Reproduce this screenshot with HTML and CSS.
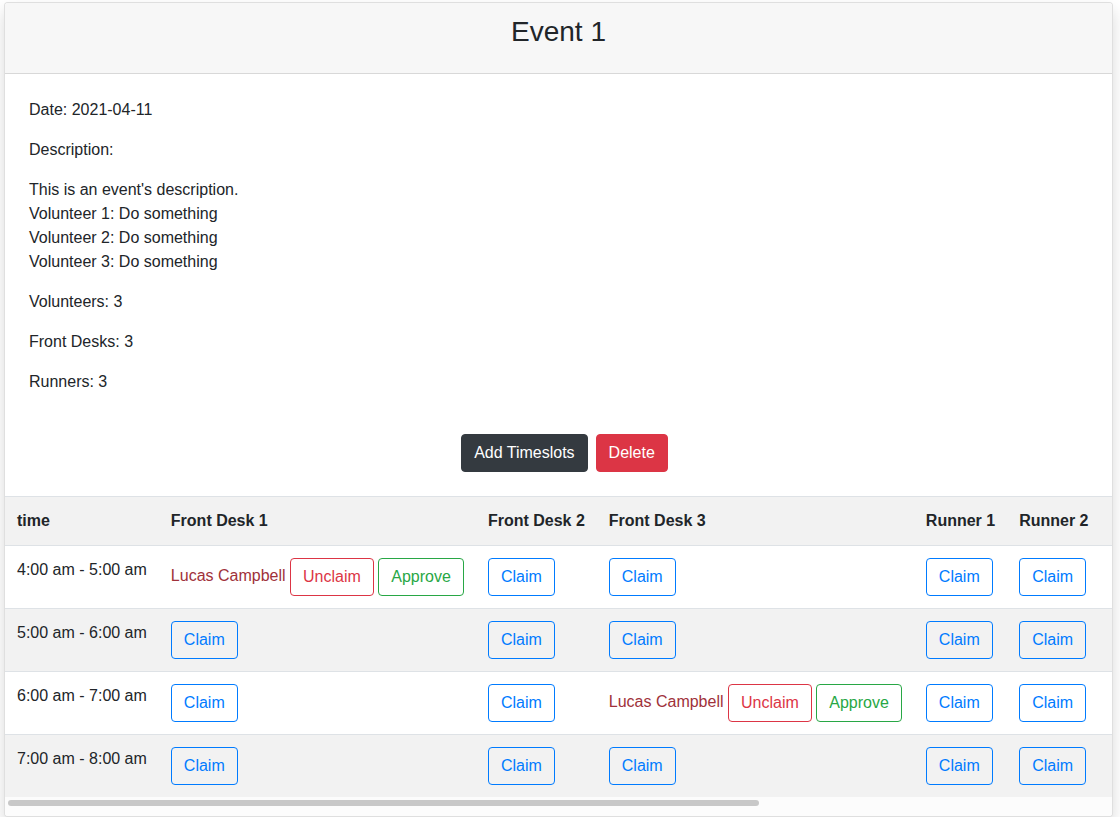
FILE: index.html
```html
<!DOCTYPE html>
<html lang="en">
<head>
<meta charset="utf-8">
<title>Event 1</title>
<link rel="stylesheet" href="styles.css">
</head>
<body>
<div class="page">
  <div class="card">
    <div class="card-header">
      <h3 class="card-title">Event 1</h3>
    </div>
    <div class="card-body">
      <p>Date: 2021-04-11</p>
      <p>Description:</p>
      <p>This is an event's description.<br>Volunteer 1: Do something<br>Volunteer 2: Do something<br>Volunteer 3: Do something</p>
      <p>Volunteers: 3</p>
      <p>Front Desks: 3</p>
      <p>Runners: 3</p>
      <div class="actions">
        <button class="btn btn-dark">Add Timeslots</button>
        <button class="btn btn-danger">Delete</button>
      </div>
    </div>
    <div class="table-responsive">
      <table class="table">
        <thead>
          <tr class="row-gray">
            <th>time</th>
            <th>Front Desk 1</th>
            <th>Front Desk 2</th>
            <th>Front Desk 3</th>
            <th>Runner 1</th>
            <th>Runner 2</th>
            <th>Runner 3</th>
            <th class="vol">Volunteer 1</th>
            <th class="vol">Volunteer 2</th>
            <th class="vol">Volunteer 3</th>
          </tr>
        </thead>
        <tbody>
          <tr>
            <td>4:00 am - 5:00 am</td>
            <td><span class="claimer">Lucas Campbell</span> <button class="btn btn-outline-danger">Unclaim</button> <button class="btn btn-outline-success">Approve</button></td>
            <td><button class="btn btn-outline-primary">Claim</button></td>
            <td><button class="btn btn-outline-primary">Claim</button></td>
            <td><button class="btn btn-outline-primary">Claim</button></td>
            <td><button class="btn btn-outline-primary">Claim</button></td>
            <td><button class="btn btn-outline-primary">Claim</button></td>
            <td><button class="btn btn-outline-primary">Claim</button></td>
            <td><button class="btn btn-outline-primary">Claim</button></td>
            <td><button class="btn btn-outline-primary">Claim</button></td>
          </tr>
          <tr class="row-gray">
            <td>5:00 am - 6:00 am</td>
            <td><button class="btn btn-outline-primary">Claim</button></td>
            <td><button class="btn btn-outline-primary">Claim</button></td>
            <td><button class="btn btn-outline-primary">Claim</button></td>
            <td><button class="btn btn-outline-primary">Claim</button></td>
            <td><button class="btn btn-outline-primary">Claim</button></td>
            <td><button class="btn btn-outline-primary">Claim</button></td>
            <td><button class="btn btn-outline-primary">Claim</button></td>
            <td><button class="btn btn-outline-primary">Claim</button></td>
            <td><button class="btn btn-outline-primary">Claim</button></td>
          </tr>
          <tr>
            <td>6:00 am - 7:00 am</td>
            <td><button class="btn btn-outline-primary">Claim</button></td>
            <td><button class="btn btn-outline-primary">Claim</button></td>
            <td><span class="claimer">Lucas Campbell</span> <button class="btn btn-outline-danger">Unclaim</button> <button class="btn btn-outline-success">Approve</button></td>
            <td><button class="btn btn-outline-primary">Claim</button></td>
            <td><button class="btn btn-outline-primary">Claim</button></td>
            <td><button class="btn btn-outline-primary">Claim</button></td>
            <td><button class="btn btn-outline-primary">Claim</button></td>
            <td><button class="btn btn-outline-primary">Claim</button></td>
            <td><button class="btn btn-outline-primary">Claim</button></td>
          </tr>
          <tr class="row-gray">
            <td>7:00 am - 8:00 am</td>
            <td><button class="btn btn-outline-primary">Claim</button></td>
            <td><button class="btn btn-outline-primary">Claim</button></td>
            <td><button class="btn btn-outline-primary">Claim</button></td>
            <td><button class="btn btn-outline-primary">Claim</button></td>
            <td><button class="btn btn-outline-primary">Claim</button></td>
            <td><button class="btn btn-outline-primary">Claim</button></td>
            <td><button class="btn btn-outline-primary">Claim</button></td>
            <td><button class="btn btn-outline-primary">Claim</button></td>
            <td><button class="btn btn-outline-primary">Claim</button></td>
          </tr>
        </tbody>
      </table>
    </div>
    <div class="scrollbar"><div class="scrollbar-thumb"></div></div>
  </div>
</div>
</body>
</html>
```
FILE: styles.css
```css
* { box-sizing: border-box; }

html, body {
  margin: 0;
  padding: 0;
  background: #fff;
}

body {
  font-family: "Liberation Sans", Arial, Helvetica, sans-serif;
  font-size: 16px;
  line-height: 1.5;
  color: #212529;
}

.page {
  padding: 2px 7px 0 4px;
}

.card {
  border: 1px solid rgba(0, 0, 0, 0.125);
  border-radius: 4px;
  background: #fff;
  box-shadow: 0 8px 16px rgba(0, 0, 0, 0.15);
  overflow: hidden;
}

.card-header {
  background: #f7f7f7;
  border-bottom: 1px solid rgba(0, 0, 0, 0.125);
  padding: 12px 20px 12px;
  text-align: center;
}

.card-title {
  margin: 0 0 12px;
  font-size: 28px;
  font-weight: 500;
  line-height: 1.2;
}

.card-body {
  padding: 24px 24px 24px;
}

.card-body p {
  margin: 0 0 16px;
}

.actions {
  display: flex;
  justify-content: center;
  gap: 8px;
  margin-top: 40px;
  padding-left: 12px;
}

.btn {
  display: inline-block;
  font-family: inherit;
  font-size: 16px;
  line-height: 1.5;
  padding: 6px 12px;
  border: 1px solid transparent;
  border-radius: 4px;
  background: transparent;
  vertical-align: middle;
  white-space: nowrap;
}

.btn-dark {
  background: #343a40;
  border-color: #343a40;
  color: #fff;
}

.btn-danger {
  background: #dc3545;
  border-color: #dc3545;
  color: #fff;
}

.btn-outline-primary {
  color: #007bff;
  border-color: #007bff;
}

.btn-outline-danger {
  color: #dc3545;
  border-color: #dc3545;
}

.btn-outline-success {
  color: #28a745;
  border-color: #28a745;
}

.claimer {
  color: #a0313a;
}

.table-responsive {
  overflow: hidden;
}

.table {
  border-collapse: collapse;
  margin: 0;
  background: #fff;
}

.table th,
.table td {
  padding: 12px;
  border-top: 1px solid #dee2e6;
  text-align: left;
  vertical-align: top;
  white-space: nowrap;
}

.table th {
  font-weight: 700;
}

.table th.vol {
  width: 145px;
}

.row-gray {
  background: #f2f2f2;
}

.scrollbar {
  height: 19px;
  background: #fcfcfc;
  padding: 3px 3px 0;
}

.scrollbar-thumb {
  width: 751px;
  height: 6px;
  border-radius: 3px;
  background: #c8c8c8;
}
```
